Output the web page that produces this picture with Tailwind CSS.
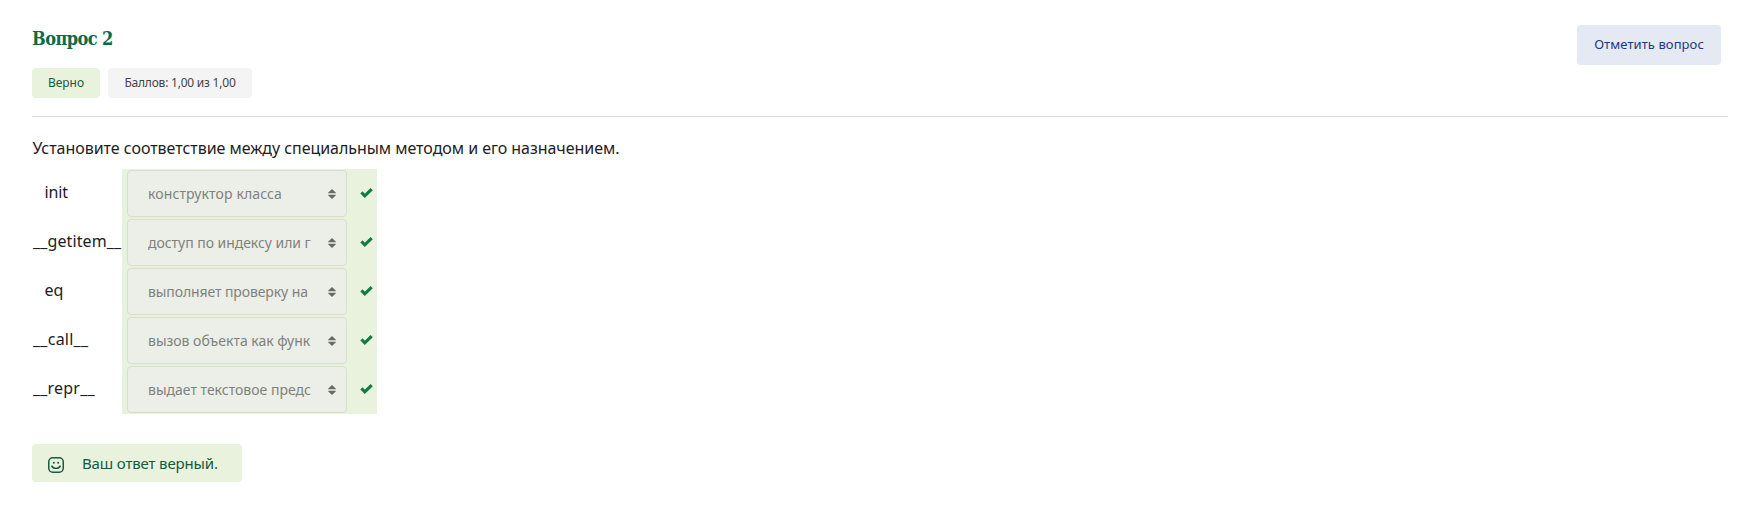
<!DOCTYPE html>
<html lang="ru">
<head>
<meta charset="utf-8">
<title>Вопрос 2</title>
<script src="https://cdn.jsdelivr.net/npm/@tailwindcss/browser@4"></script>
</head>
<body class="bg-white font-['Noto_Sans',sans-serif] text-[#1d2125]">
<svg class="hidden">
  <symbol id="sort" viewBox="0 0 8 10"><path d="M4 0 7.9 3.7Q8 4.2 7.4 4.2H.6Q0 4.2.1 3.7ZM4 10 .1 6.3Q0 5.8.6 5.8H7.4Q8 5.8 7.9 6.3Z"/></symbol>
  <symbol id="check" viewBox="0 0 13 13"><path d="M1.4 6.4 4.8 9.8 11.7 3.1" fill="none" stroke="#107c41" stroke-width="3.1"/></symbol>
</svg>
<main class="pl-8 pr-4 pt-[25px]">
  <header class="flex h-[92px] items-start justify-between border-b border-[#dcdcdc] pr-[7px]">
    <div>
      <h1 class="h-[43px] font-['DejaVu_Serif_Condensed','DejaVu_Serif',serif] text-[18px] leading-[27px] font-bold tracking-[-0.55px] text-[#0b6b45]">Вопрос 2</h1>
      <div class="flex gap-2 text-xs leading-[30px]">
        <span class="h-[30px] w-[68px] rounded bg-[#e8f2dc] text-center text-[#17593f]">Верно</span>
        <span class="h-[30px] w-36 rounded bg-[#f4f4f4] text-center tracking-[-0.22px] text-[#444]">Баллов: 1,00 из 1,00</span>
      </div>
    </div>
    <button class="h-10 w-36 rounded bg-[#e4e9f4] text-[13px] tracking-[0.08px] text-[#1c3a83]">Отметить вопрос</button>
  </header>
  <p class="mt-[19px] h-[33px] pl-[0.5px] text-base leading-6 tracking-[-0.04px] whitespace-nowrap">Установите соответствие между специальным методом и его назначением.</p>
  <div class="w-[345px]">
    <div class="flex h-[49px]"><div class="w-[90px] pl-[12.5px] text-base leading-[47px] tracking-[-0.1px]">init</div><div class="flex flex-1 items-center bg-[#e8f2dc] pl-[5px]"><div class="flex h-[47px] w-[220px] items-center rounded border border-[#d6dfcc] bg-[#ecefe8] pl-5 text-[#7f827c]"><span class="w-[163px] overflow-hidden text-sm tracking-[0.12px] whitespace-nowrap">конструктор класса</span><svg class="ml-[17px] h-[10px] w-2 shrink-0 fill-[#666b66]"><use href="#sort"/></svg></div><svg class="-mt-[3px] ml-[13px] h-[13px] w-[13px]"><use href="#check"/></svg></div></div>
    <div class="flex h-[49px]"><div class="w-[90px] pl-[1px] text-base leading-[47px] tracking-[0.12px]">__getitem__</div><div class="flex flex-1 items-center bg-[#e8f2dc] pl-[5px]"><div class="flex h-[47px] w-[220px] items-center rounded border border-[#d6dfcc] bg-[#ecefe8] pl-5 text-[#7f827c]"><span class="w-[163px] overflow-hidden text-sm tracking-[-0.04px] whitespace-nowrap">доступ по индексу или г</span><svg class="ml-[17px] h-[10px] w-2 shrink-0 fill-[#666b66]"><use href="#sort"/></svg></div><svg class="-mt-[3px] ml-[13px] h-[13px] w-[13px]"><use href="#check"/></svg></div></div>
    <div class="flex h-[49px]"><div class="w-[90px] pl-[12.5px] text-base leading-[47px]">eq</div><div class="flex flex-1 items-center bg-[#e8f2dc] pl-[5px]"><div class="flex h-[47px] w-[220px] items-center rounded border border-[#d6dfcc] bg-[#ecefe8] pl-5 text-[#7f827c]"><span class="w-[163px] overflow-hidden text-sm tracking-[-0.1px] whitespace-nowrap">выполняет проверку на</span><svg class="ml-[17px] h-[10px] w-2 shrink-0 fill-[#666b66]"><use href="#sort"/></svg></div><svg class="-mt-[3px] ml-[13px] h-[13px] w-[13px]"><use href="#check"/></svg></div></div>
    <div class="flex h-[49px]"><div class="w-[90px] pl-[1px] text-base leading-[47px] tracking-[0.25px]">__call__</div><div class="flex flex-1 items-center bg-[#e8f2dc] pl-[5px]"><div class="flex h-[47px] w-[220px] items-center rounded border border-[#d6dfcc] bg-[#ecefe8] pl-5 text-[#7f827c]"><span class="w-[163px] overflow-hidden text-sm tracking-[-0.02px] whitespace-nowrap">вызов объекта как функ</span><svg class="ml-[17px] h-[10px] w-2 shrink-0 fill-[#666b66]"><use href="#sort"/></svg></div><svg class="-mt-[3px] ml-[13px] h-[13px] w-[13px]"><use href="#check"/></svg></div></div>
    <div class="flex h-[49px]"><div class="w-[90px] pl-[1px] text-base leading-[47px] tracking-[0.2px]">__repr__</div><div class="flex flex-1 items-center bg-[#e8f2dc] pl-[5px]"><div class="flex h-[47px] w-[220px] items-center rounded border border-[#d6dfcc] bg-[#ecefe8] pl-5 text-[#7f827c]"><span class="w-[163px] overflow-hidden text-sm whitespace-nowrap">выдает текстовое предс</span><svg class="ml-[17px] h-[10px] w-2 shrink-0 fill-[#666b66]"><use href="#sort"/></svg></div><svg class="-mt-[3px] ml-[13px] h-[13px] w-[13px]"><use href="#check"/></svg></div></div>
  </div>
  <div class="mt-[30px] flex h-[38px] w-[210px] rounded bg-[#e8f2dc] pl-4 text-[#17593f]">
    <svg class="mt-[13px] h-4 w-4 shrink-0" viewBox="0 0 16 16" fill="none" stroke="currentColor" stroke-width="1.5"><rect x=".75" y=".75" width="14.5" height="14.5" rx="4"/><path d="M3.6 8.6Q4.8 11.4 8 11.4T12.4 8.6" stroke-width="1.4"/><circle cx="5.8" cy="5.8" r="1" fill="currentColor" stroke="none"/><circle cx="10.2" cy="5.8" r="1" fill="currentColor" stroke="none"/></svg>
    <span class="ml-[18px] text-[15px] leading-[38px] tracking-[-0.15px] whitespace-nowrap">Ваш ответ верный.</span>
  </div>
</main>
</body>
</html>
